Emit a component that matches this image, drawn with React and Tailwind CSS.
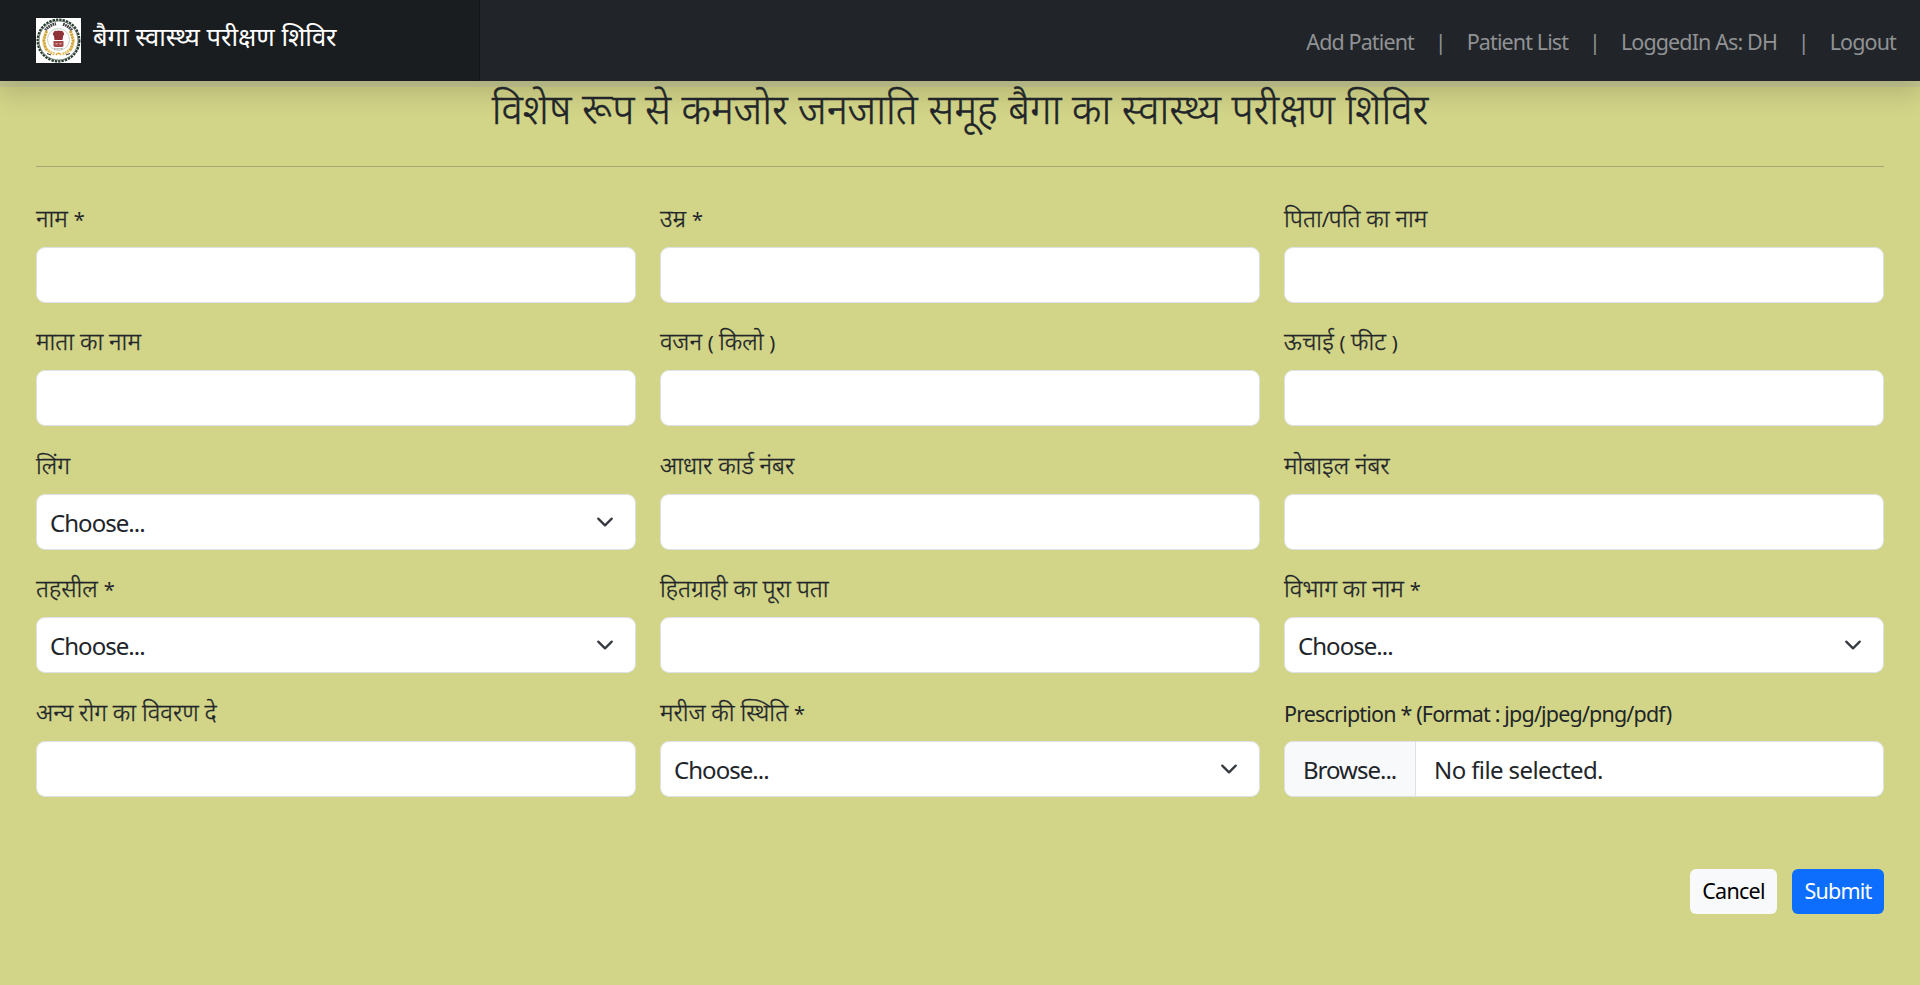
import React from "react";

const fields = [
  { label: "नाम *" },
  { label: "उम्र *" },
  { label: "पिता/पति का नाम" },
  { label: "माता का नाम" },
  { label: "वजन ( किलो )" },
  { label: "ऊचाई ( फीट )" },
  { label: "लिंग", type: "select" },
  { label: "आधार कार्ड नंबर" },
  { label: "मोबाइल नंबर" },
  { label: "तहसील *", type: "select" },
  { label: "हितग्राही का पूरा पता" },
  { label: "विभाग का नाम *", type: "select" },
  { label: "अन्य रोग का विवरण दे" },
  { label: "मरीज की स्थिति *", type: "select" },
  { label: "Prescription * (Format : jpg/jpeg/png/pdf)", type: "file" },
];

function Emblem() {
  const wreath = [0, 1, 2, 3, 4, 5, 6];
  return (
    <svg viewBox="0 0 45 45" className="h-[45px] w-[45px] shrink-0 bg-white">
      <circle cx="22.5" cy="22.5" r="20.9" fill="none" stroke="#253a2c" strokeWidth="2.2" strokeDasharray="2.4 1" />
      <circle cx="22.5" cy="22.5" r="19.6" fill="#fff" stroke="#2f4435" strokeWidth="0.8" />
      <path d="M9.3 12.2A17 17 0 0 1 20 5.7M27 6.2A17 17 0 0 1 36 12.6" fill="none" stroke="#444" strokeWidth="3" strokeDasharray="1.7 .6" />
      <path d="M11 13C4.500 23 8 33 18.500 36M34 13C40.500 23 37 33 26.500 36" fill="none" stroke="#e6c56f" strokeWidth="3" strokeDasharray="2.2 .5" />
      {wreath.map((i) => (
        <g key={i} fill="#cfa238">
          <ellipse cx={8 + Math.abs(3 - i) * 0.7} cy={14 + i * 2.9} rx="1.500" ry="1" />
          <ellipse cx={37 - Math.abs(3 - i) * 0.7} cy={14 + i * 2.9} rx="1.500" ry="1" />
        </g>
      ))}
      <path d="M20 37q2.500-3.500 5 0" fill="none" stroke="#e0a62c" strokeWidth="1.4" />
      <path d="M11 35.500l4 1.500M34 35.500l-4 1.500" stroke="#333" strokeWidth="1" />
      <circle cx="22.500" cy="21.500" r="11" fill="#fff" stroke="#b9c9b6" strokeWidth="0.800" />
      <path d="M17.500 14.500q1-2.500 3-1.500 2-1 4 0 2-1 3 1.500l.8 1.500-1.200 2-.6 4h-8l-.6-4-1.200-2z" fill="#8f3338" />
      <path d="M17.500 23h10v4.500q0 1.500-2 1.500h-6q-2 0-2-1.500z" fill="#a5484a" />
      <path d="M19.500 25.800h2M23.500 25.800h2" stroke="#efd0cd" strokeWidth="1" />
      <path d="M18 30.800h9" stroke="#777" strokeWidth="0.900" strokeDasharray="1 .4" />
    </svg>
  );
}

function Label({ text, latin }) {
  if (latin) {
    return <div className="h-[45px] whitespace-nowrap text-[21.5px] leading-[36px] tracking-[-0.82px]">{text}</div>;
  }
  return (
    <div className="h-[45px] whitespace-nowrap text-[24px] font-light leading-[32px] [-webkit-text-stroke:0.3px_#212529] [word-spacing:-0.4px]">
      {text.split(/([*()/])/).map((part, i) =>
        i % 2 ? <span key={i} className="text-[20px] font-normal tracking-[-0.6px] [-webkit-text-stroke:0]">{part}</span> : part
      )}
    </div>
  );
}

function Control({ type }) {
  const box = "flex h-14 w-full items-center overflow-hidden rounded-[9px] border border-[#dee2e6] bg-white text-[24px] text-[#212529]";
  if (type === "select") {
    return (
      <div className={box + " justify-between pl-[13px] pr-[21px]"}>
        <span className="pt-[2px] tracking-[-0.95px]">Choose...</span>
        <svg viewBox="0 0 16 16" className="h-[18px] w-[18px]" fill="none" stroke="#343a40" strokeWidth="2" strokeLinecap="round" strokeLinejoin="round">
          <path d="m2 5 6 6 6-6" />
        </svg>
      </div>
    );
  }
  if (type === "file") {
    return (
      <div className={box}>
        <span className="flex h-full w-[131px] items-center border-r border-[#dee2e6] bg-[#f8f9fa] pl-[18px] pt-[2px] tracking-[-1px]">Browse...</span>
        <span className="pl-[18px] pt-[2px] tracking-[-0.6px]">No file selected.</span>
      </div>
    );
  }
  return <input className={box + " px-[14px]"} />;
}

export default function App() {
  return (
    <div className="flex h-[985px] w-full flex-col overflow-hidden bg-[#d2d488] font-['Noto_Sans','Open_Sans',sans-serif] text-[#212529]">
      <header className="relative flex h-[81px] shrink-0 bg-[#212529] shadow-[0_12px_24px_rgba(0,0,0,0.15)]">
        <div className="flex w-[480px] items-start gap-[12px] border-r border-[#121416] bg-[#1a1d20] pl-9 pt-[18px]">
          <Emblem />
          <span className="whitespace-nowrap text-[25.5px] leading-[37px] text-white">बैगा स्वास्थ्य परीक्षण शिविर</span>
        </div>
        <nav className="flex flex-1 items-center justify-end gap-[20.9px] pr-6 pt-[4px] text-[21.5px] tracking-[-0.88px] text-[#909294]">
          <span>Add Patient</span>
          <span>|</span>
          <span>Patient List</span>
          <span>|</span>
          <span>LoggedIn As: DH</span>
          <span>|</span>
          <span>Logout</span>
        </nav>
        <div className="absolute left-0 top-[81px] h-[6px] w-full bg-[#969ba0]/25" />
      </header>
      <main className="px-9">
        <h1 className="relative h-[85px] origin-center scale-x-[0.965] whitespace-nowrap pt-[2px] text-center text-[42px] font-light leading-[49px] [-webkit-text-stroke:0.4px_#212529]">विशेष रूप से कमजोर जनजाति समूह बैगा का स्वास्थ्य परीक्षण शिविर</h1>
        <hr className="border-0 border-t border-t-[#a7a975]" />
        <form className="grid grid-cols-3 gap-x-6 pt-[35px]">
          {fields.map((f) => (
            <div key={f.label} className="h-[123.4px]">
              <Label text={f.label} latin={f.type === "file"} />
              <Control type={f.type} />
            </div>
          ))}
        </form>
        <div className="flex justify-end gap-[15px] pt-[50px] text-[21.5px] tracking-[-0.75px]">
          <button className="h-[45px] w-[87px] rounded-[6px] bg-[#f8f9fa] text-black">Cancel</button>
          <button className="h-[45px] w-[92px] rounded-[6px] bg-[#0d6efd] text-white">Submit</button>
        </div>
      </main>
    </div>
  );
}
